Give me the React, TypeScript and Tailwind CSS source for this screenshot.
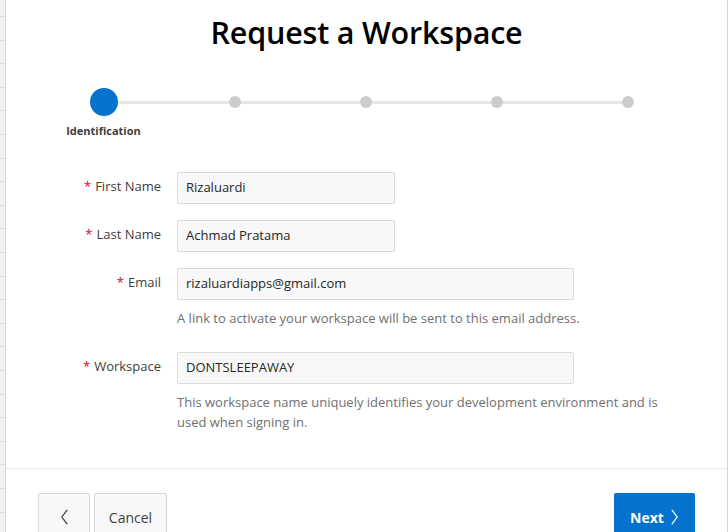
import React from "react"

const font = { fontFamily: '"Open Sans", "Noto Sans", Arial, sans-serif' }

const steps = ["Identification", "", "", "", ""]

const fields = [
  { label: "First Name", value: "Rizaluardi", wide: false },
  { label: "Last Name", value: "Achmad Pratama", wide: false },
  {
    label: "Email",
    value: "rizaluardiapps@gmail.com",
    wide: true,
    help: "A link to activate your workspace will be sent to this email address.",
  },
  {
    label: "Workspace",
    value: "DONTSLEEPAWAY",
    wide: true,
    help: "This workspace name uniquely identifies your development environment and is used when signing in.",
  },
]

function Chevron({ dir, className }: { dir: "left" | "right"; className?: string }) {
  return (
    <svg viewBox="0 0 10 18" className={className} fill="none" stroke="currentColor" strokeWidth="1.4">
      {dir === "left" ? <polyline points="8,1 2,9 8,17" /> : <polyline points="2,1 8,9 2,17" />}
    </svg>
  )
}

export default function App() {
  return (
    <div className="w-[728px] h-[532px] overflow-hidden flex bg-[#f2f2f2]" style={font}>
      {/* page grid behind the dialog */}
      <div className="w-[5px] bg-[repeating-linear-gradient(to_bottom,#f2f2f2_0px,#f2f2f2_16px,#dcdcdc_16px,#dcdcdc_17px,#f2f2f2_17px,#f2f2f2_23.6px)]" />

      <div className="flex-1 flex flex-col bg-white border-x border-[#d4d4d4]">
        <div className="h-[469px] shrink-0 border-b border-[#e8e8e8] flex flex-col">
          <h1 className="text-center text-[30.5px] leading-[36px] font-semibold text-black mt-[14px] tracking-[-0.2px]">
            Request a Workspace
          </h1>

          {/* progress */}
          <div className="grid grid-cols-5 pl-[32px] pr-[34px] mt-[38px]">
            {steps.map((s, i) => (
              <div key={i} className="flex flex-col items-center">
                <div className="w-full h-7 flex items-center">
                  <div className={`flex-1 h-[3px] ${i === 0 ? "" : "bg-[#e6e6e6]"}`} />
                  {i === 0 ? (
                    <div className="w-7 h-7 rounded-full bg-[#0572ce]" />
                  ) : (
                    <div className="w-3 h-3 rounded-full bg-[#cccccc]" />
                  )}
                  <div className={`flex-1 h-[3px] ${i === steps.length - 1 ? "" : "bg-[#e6e6e6]"}`} />
                </div>
                <div className="mt-[8px] text-[11px] leading-[14px] font-bold text-[#404040] h-[14px]">{s}</div>
              </div>
            ))}
          </div>

          {/* form */}
          <div className="mt-[34px] flex flex-col">
            {fields.map((f) => (
              <div key={f.label} className={`flex ${f.help ? "pb-6" : "pb-4"}`}>
                <div className="w-[155px] text-right text-[13px] leading-[18px] text-[#404040] pt-[5px]">
                  <span className="text-[#e0001e] mr-[4px]">*</span>
                  {f.label}
                </div>
                <div className="ml-4 flex flex-col">
                  <div
                    className={`h-8 ${f.wide ? "w-[397px]" : "w-[218px]"} bg-[#f8f8f8] border border-[#dcdcdc] rounded-[2px] px-2 flex items-center text-[13px] text-[#262626]`}
                  >
                    {f.value}
                  </div>
                  {f.help && (
                    <p className="mt-2 w-[500px] text-[13px] leading-5 text-[#707070]">{f.help}</p>
                  )}
                </div>
              </div>
            ))}
          </div>
        </div>

        {/* footer */}
        <div className="flex justify-between px-8 pt-6 shrink-0">
          <div className="flex gap-1">
            <button className="w-[52px] h-[48px] bg-[#f8f8f8] border border-[#d6d6d6] rounded-[2px] flex items-center justify-center text-[#404040]">
              <Chevron dir="left" className="w-[9px] h-[16px]" />
            </button>
            <button className="w-[73px] h-[48px] bg-[#f8f8f8] border border-[#d6d6d6] rounded-[2px] text-[14px] text-[#404040]">
              Cancel
            </button>
          </div>
          <button className="w-[81px] h-[48px] bg-[#0572ce] rounded-[2px] flex items-center justify-center gap-[6px] text-white text-[14px] font-bold">
            Next
            <Chevron dir="right" className="w-[9px] h-[16px]" />
          </button>
        </div>
      </div>
    </div>
  )
}
